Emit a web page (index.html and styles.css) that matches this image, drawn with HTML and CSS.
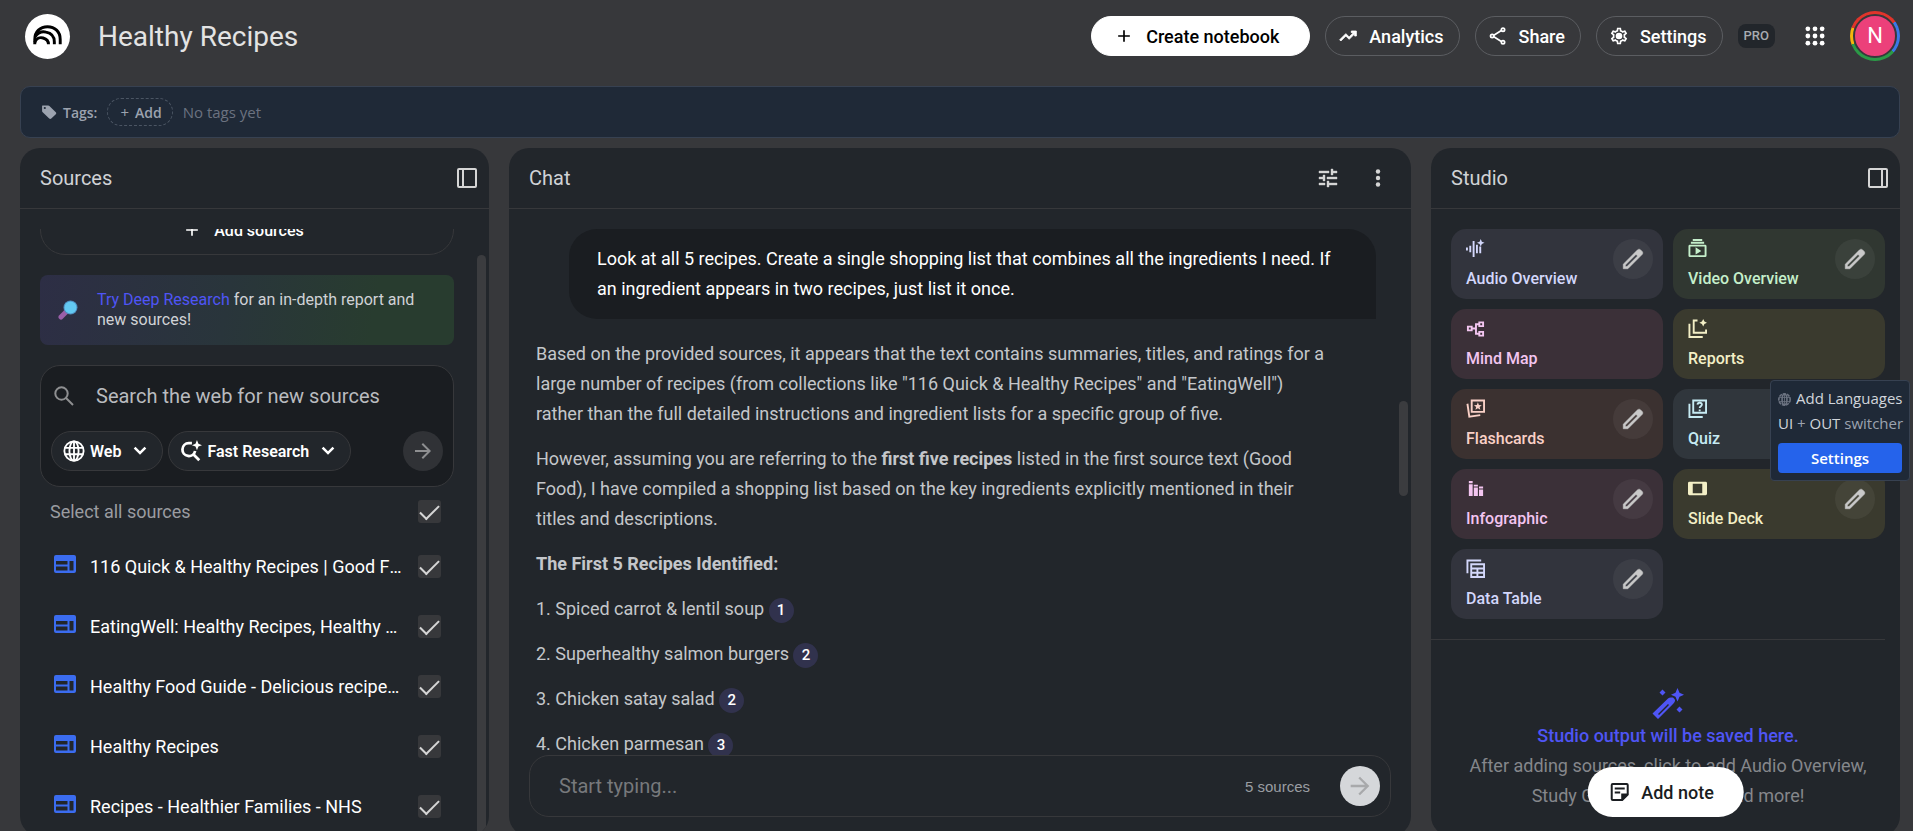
FILE: index.html
```html
<!DOCTYPE html>
<html lang="en">
<head>
  <meta charset="utf-8">
  <title>Healthy Recipes</title>
  <link rel="stylesheet" href="styles.css">
</head>

<body>

<!-- icons that are used more than once -->
<svg class="sprite" aria-hidden="true">
  <symbol id="plus" viewBox="0 0 24 24"><path d="M11 19v-6H5v-2h6V5h2v6h6v2h-6v6z"/></symbol>
  <symbol id="arrow" viewBox="0 0 24 24"><path d="M16.2 13H4v-2h12.2l-5.6-5.6L12 4l8 8-8 8-1.4-1.4z"/></symbol>
  <symbol id="chevron" viewBox="0 0 24 24"><path d="M12 17 3.600 8.600l2.400-2.400 6 6 6-6 2.400 2.400z"/></symbol>
  <symbol id="edit" viewBox="0 0 24 24"><path d="M5 19h1.425L16.2 9.225 14.775 7.8 5 17.575V19Zm-2 2v-4.250L16.200 3.575q.3-.275.663-.425T17.625 3q.4 0 .775.150t.65.450L20.425 5q.3.275.438.650T21 6.400q0 .4-.137.763t-.438.662L7.250 21H3Z" stroke="currentColor" stroke-width=".5"/></symbol>
  <symbol id="web" viewBox="0 0 22 18"><path fill-rule="evenodd" d="M2 0h18a2 2 0 0 1 2 2v14a2 2 0 0 1-2 2H2a2 2 0 0 1-2-2V2a2 2 0 0 1 2-2zm0 6v3.500h11.500V6zm0 5.500V15.500h11.500v-4zM15.500 6v9.500h4V6z"/></symbol>
</svg>

<header class="topbar">
  <a class="logo" href="#" aria-label="Home">
    <svg viewBox="0 0 46 46" fill="none" stroke="#000" stroke-width="3">
      <path d="M10 31v-5c0-8 5.500-13 13-13s13 5 13 13v5"/>
      <path d="M10.500 23c3-4 7-5.500 11-4.500 5.500 1 8.500 5 8.500 10V31"/>
      <path d="M10 29c1.500-4 5-5.500 8.500-4.500 3.500 1 5.500 3.500 5.500 6.500"/>
    </svg>
  </a>
  <h1>Healthy Recipes</h1>
  <nav class="actions">
    <button class="pill create"><svg><use href="#plus"/></svg>Create notebook</button>
    <button class="pill"><svg viewBox="0 0 24 24"><path d="m3.400 18-1.400-1.400L9.400 9.150l4 4L18.600 8H16V6h6v6h-2V9.400L13.400 16l-4-4z" stroke="currentColor"/></svg>Analytics</button>
    <button class="pill"><svg viewBox="0 0 24 24" fill="none" stroke="currentColor" stroke-width="2"><circle cx="18" cy="4.500" r="2"/><circle cx="5" cy="12" r="2"/><circle cx="18" cy="19.500" r="2"/><path d="m7 11 9-5.500M7 13l9 5.500" /></svg>Share</button>
    <button class="pill"><svg viewBox="0 0 24 24"><path d="M19.430 12.980c.04-.32.07-.64.070-.98 0-.34-.03-.66-.07-.98l2.110-1.650c.19-.15.24-.42.120-.64l-2-3.460c-.09-.16-.26-.25-.44-.25-.06 0-.12.010-.17.030l-2.490 1c-.52-.4-1.080-.73-1.690-.98l-.38-2.650C14.460 2.180 14.250 2 14 2h-4c-.25 0-.46.180-.49.420l-.38 2.650c-.61.250-1.170.590-1.690.980l-2.490-1c-.06-.02-.12-.03-.18-.03-.17 0-.34.090-.43.250l-2 3.460c-.13.220-.07.490.120.640l2.110 1.650c-.04.320-.07.650-.07.980 0 .33.03.660.070.980l-2.110 1.650c-.19.150-.24.420-.12.640l2 3.460c.09.160.26.250.440.250.06 0 .12-.01.170-.03l2.490-1c.52.4 1.080.730 1.690.980l.38 2.650c.03.240.24.420.490.420h4c.25 0 .46-.18.490-.42l.38-2.650c.61-.25 1.170-.59 1.690-.98l2.490 1c.06.020.12.030.180.030.17 0 .34-.09.430-.25l2-3.460c.12-.22.070-.49-.12-.64l-2.110-1.650zm-1.980-1.710c.04.310.05.520.050.730 0 .21-.02.430-.05.730l-.14 1.130.89.7 1.080.840-.7 1.210-1.270-.51-1.040-.42-.9.680c-.43.320-.84.560-1.250.730l-1.060.430-.16 1.130-.2 1.350h-1.400l-.19-1.350-.16-1.130-1.060-.43c-.43-.18-.83-.41-1.230-.71l-.91-.7-1.060.430-1.270.510-.7-1.210 1.080-.84.890-.7-.14-1.130c-.03-.31-.05-.54-.05-.74s.02-.43.050-.73l.14-1.130-.89-.7-1.080-.84.7-1.210 1.270.510 1.040.420.9-.68c.43-.32.840-.56 1.250-.73l1.060-.43.160-1.130.2-1.350h1.390l.19 1.350.16 1.130 1.060.430c.43.180.83.410 1.230.710l.91.7 1.060-.43 1.270-.51.7 1.210-1.070.850-.89.7.14 1.130z"/><circle cx="12" cy="12" r="4"/></svg>Settings</button>
    <span class="pro">PRO</span>
    <button class="icon-btn apps" aria-label="Apps"><svg viewBox="0 0 21 21"><circle cx="3" cy="3" r="2.500"/><circle cx="10.500" cy="3" r="2.500"/><circle cx="18" cy="3" r="2.500"/><circle cx="3" cy="10.500" r="2.500"/><circle cx="10.500" cy="10.500" r="2.500"/><circle cx="18" cy="10.500" r="2.500"/><circle cx="3" cy="18" r="2.500"/><circle cx="10.500" cy="18" r="2.500"/><circle cx="18" cy="18" r="2.500"/></svg></button>
    <button class="avatar" aria-label="Account"><span>N</span></button>
  </nav>
</header>

<div class="tagbar">
  <svg viewBox="0 0 16 16"><path fill-rule="evenodd" d="M1.500 1.500h5.700c.5 0 .9.200 1.200.5l6.400 6.200c.6.6.6 1.500 0 2.100l-4.500 4.300c-.6.6-1.500.6-2.100 0L1.700 8.300c-.4-.3-.6-.7-.6-1.200V2c0-.3.100-.5.400-.5zm2.300 1.400a1.100 1.100 0 1 0 0 2.200 1.100 1.100 0 0 0 0-2.200z"/></svg>
  <b>Tags:</b>
  <button class="add-tag"><span>+</span><b>Add</b></button>
  <span class="no-tags">No tags yet</span>
</div>

<main class="panels">

  <section class="panel sources">
    <div class="panel-head">
      <h2>Sources</h2>
      <button class="icon-btn" aria-label="Collapse sources"><svg viewBox="0 0 20 20"><path fill-rule="evenodd" d="M2 0h16a2 2 0 0 1 2 2v16a2 2 0 0 1-2 2H2a2 2 0 0 1-2-2V2a2 2 0 0 1 2-2zm0 2v16h3V2zm5 0v16h11V2z"/></svg></button>
    </div>
    <div class="source-scroll">
      <div class="source-body">
        <button class="add-sources"><svg><use href="#plus"/></svg>Add sources</button>
        <div class="promo">
          <svg viewBox="0 0 20 20"><path d="m3 17 5-5" stroke="#9a5fa8" stroke-width="5" stroke-linecap="round"/><circle cx="12.500" cy="7.500" r="7" fill="#4f8fc0"/><circle cx="12.500" cy="7.500" r="6" fill="#63c9f2"/></svg>
          <p><a href="#">Try Deep Research</a> for an in-depth report and new sources!</p>
        </div>
        <div class="search-box">
          <div class="search-row">
            <svg viewBox="0 0 20 20" fill="none" stroke="currentColor" stroke-width="2"><circle cx="7.500" cy="7.500" r="6.200"/><path d="m12 12 7 7"/></svg>
            <input type="text" aria-label="Search the web" placeholder="Search the web for new sources">
          </div>
          <div class="chip-row">
            <button class="chip"><svg viewBox="0 0 24 24" fill="none" stroke="currentColor" stroke-width="2"><circle cx="12" cy="12" r="10.500"/><ellipse cx="12" cy="12" rx="5" ry="10.500"/><path d="M2 8.500h20M2 15.500h20M12 2v20"/></svg>Web<svg class="chev"><use href="#chevron"/></svg></button>
            <button class="chip"><svg viewBox="0 0 24 24"><path d="M13 3.500H9.500a7 7 0 1 0 7 8.500" fill="none" stroke="currentColor" stroke-width="3"/><path d="m14 15 7 7" stroke="currentColor" stroke-width="3"/><path d="m18.500 0 1.600 4 3.900 1.600-3.900 1.600-1.600 4-1.600-4L13 5.600 16.900 4z"/></svg>Fast Research<svg class="chev"><use href="#chevron"/></svg></button>
            <button class="go" aria-label="Search"><svg><use href="#arrow"/></svg></button>
          </div>
        </div>
        <label class="select-all"><span>Select all sources</span><input type="checkbox" checked></label>
        <label class="source"><svg><use href="#web"/></svg><span>116 Quick &amp; Healthy Recipes | Good Food</span><input type="checkbox" checked></label>
        <label class="source"><svg><use href="#web"/></svg><span>EatingWell: Healthy Recipes, Healthy Eating</span><input type="checkbox" checked></label>
        <label class="source"><svg><use href="#web"/></svg><span>Healthy Food Guide - Delicious recipes and more</span><input type="checkbox" checked></label>
        <label class="source"><svg><use href="#web"/></svg><span>Healthy Recipes</span><input type="checkbox" checked></label>
        <label class="source"><svg><use href="#web"/></svg><span>Recipes - Healthier Families - NHS</span><input type="checkbox" checked></label>
      </div>
      <div class="thumb source-thumb"></div>
    </div>
  </section>

  <section class="panel chat">
    <div class="panel-head">
      <h2>Chat</h2>
      <button class="icon-btn" aria-label="Configure chat"><svg viewBox="2 2 20 20"><path d="M3 17v2h6v-2H3zM3 5v2h10V5H3zm10 16v-2h8v-2h-8v-2h-2v6h2zM7 9v2H3v2h4v2h2V9H7zm14 4v-2H11v2h10zm-6-4h2V7h4V5h-4V3h-2v6z" stroke="currentColor" stroke-width=".4"/></svg></button>
      <button class="icon-btn" aria-label="More"><svg viewBox="0 0 20 20"><circle cx="10" cy="3.500" r="2.200"/><circle cx="10" cy="10" r="2.200"/><circle cx="10" cy="16.500" r="2.200"/></svg></button>
    </div>
    <div class="messages">
      <div class="question">Look at all 5 recipes. Create a single shopping list that combines all the ingredients I need. If an ingredient appears in two recipes, just list it once.</div>
      <div class="answer">
        <p>Based on the provided sources, it appears that the text contains summaries, titles, and ratings for a large number of recipes (from collections like "116 Quick &amp; Healthy Recipes" and "EatingWell") rather than the full detailed instructions and ingredient lists for a specific group of five.</p>
        <p>However, assuming you are referring to the <b>first five recipes</b> listed in the first source text (Good Food), I have compiled a shopping list based on the key ingredients explicitly mentioned in their titles and descriptions.</p>
        <p><b>The First 5 Recipes Identified:</b></p>
        <p>1. Spiced carrot &amp; lentil soup <button class="cite">1</button></p>
        <p>2. Superhealthy salmon burgers <button class="cite">2</button></p>
        <p>3. Chicken satay salad <button class="cite">2</button></p>
        <p>4. Chicken parmesan <button class="cite">3</button></p>
      </div>
      <div class="thumb chat-thumb"></div>
    </div>
    <div class="composer">
      <input type="text" aria-label="Message" placeholder="Start typing...">
      <span class="count">5 sources</span>
      <button class="send" aria-label="Send"><svg><use href="#arrow"/></svg></button>
    </div>
  </section>

  <section class="panel studio">
    <div class="panel-head">
      <h2>Studio</h2>
      <button class="icon-btn" aria-label="Collapse studio"><svg viewBox="0 0 20 20"><path fill-rule="evenodd" d="M2 0h16a2 2 0 0 1 2 2v16a2 2 0 0 1-2 2H2a2 2 0 0 1-2-2V2a2 2 0 0 1 2-2zm0 2v16h11V2zm13 0v16h3V2z"/></svg></button>
    </div>
    <div class="tiles">
      <div class="tile blue">
        <a href="#"><svg viewBox="0 0 20 20"><path d="M0 9h2v3H0zM3.500 7h2v7h-2zM7 2h2v17H7zM10.500 6h2v9h-2zM14 8h2v7h-2z"/><path d="m15.500 0 1.200 2.800L19.500 4l-2.800 1.200L15.500 8l-1.200-2.800L11.500 4l2.800-1.200z"/></svg>Audio Overview</a>
        <button class="edit" aria-label="Edit"><svg><use href="#edit"/></svg></button>
      </div>
      <div class="tile green">
        <a href="#"><svg viewBox="0 0 20 20"><path d="M5 0h10v2H5zM3 3h14v2H3z"/><path fill-rule="evenodd" d="M2 6h16a1.500 1.500 0 0 1 1.500 1.500v10A1.500 1.500 0 0 1 18 19H2a1.500 1.500 0 0 1-1.500-1.500v-10A1.500 1.500 0 0 1 2 6zm.5 2v9h15V8zM8 8.800l6 3.700-6 3.700z"/></svg>Video Overview</a>
        <button class="edit" aria-label="Edit"><svg><use href="#edit"/></svg></button>
      </div>
      <div class="tile pink">
        <a href="#"><svg viewBox="0 0 20 20" fill="none" stroke="currentColor" stroke-width="2"><path d="M2 8h4v4H2zM14 3.500h4v4h-4zM14 13.500h4v4h-4zM6 10h4M14 5.500h-3.500v10H14"/></svg>Mind Map</a>
      </div>
      <div class="tile yellow">
        <a href="#"><svg viewBox="0 0 20 20"><path d="M10 1.500H6v13h13V11M1.500 5v14h14" fill="none" stroke="currentColor" stroke-width="2"/><path d="m16 0 1.300 2.700L20 4l-2.700 1.300L16 8l-1.300-2.700L12 4l2.700-1.300z"/></svg>Reports</a>
      </div>
      <div class="tile orange">
        <a href="#"><svg viewBox="0 0 20 20"><path d="M6 1.500h13v12H6zM1.500 5l2 13.500L15 17" fill="none" stroke="currentColor" stroke-width="2"/><path d="m12.500 3.500 1.100 2.800 3 .2-2.300 1.900.8 2.900-2.600-1.600-2.600 1.600.8-2.900-2.300-1.900 3-.2z"/></svg>Flashcards</a>
        <button class="edit" aria-label="Edit"><svg><use href="#edit"/></svg></button>
      </div>
      <div class="tile teal">
        <a href="#"><svg viewBox="0 0 20 20" fill="none" stroke="currentColor" stroke-width="2"><path d="M5.500 1.500H19v13H5.500zM1.500 5v14h14M10 6c.3-3 4.800-2.600 4.600 0-.1 1.500-2.300 1.700-2.300 3.500M12.300 11v1.800"/></svg>Quiz</a>
        <button class="edit" aria-label="Edit"><svg><use href="#edit"/></svg></button>
      </div>
      <div class="tile pink">
        <a href="#"><svg viewBox="0 0 20 20"><path d="M3 2h4v2.500H3zM3 5.500h4V18H3zM8.200 6h4.300v2H8.200zM8.200 9h4.300v9H8.200zM13.700 8H18v2h-4.300zM13.700 11H18v7h-4.300z"/></svg>Infographic</a>
        <button class="edit" aria-label="Edit"><svg><use href="#edit"/></svg></button>
      </div>
      <div class="tile yellow">
        <a href="#"><svg viewBox="0 0 20 20"><path fill-rule="evenodd" d="M1.500 3h17A1.500 1.500 0 0 1 20 4.500v11a1.500 1.500 0 0 1-1.500 1.500h-17A1.500 1.500 0 0 1 0 15.500v-11A1.500 1.500 0 0 1 1.500 3zM5 5v10h10V5z"/></svg>Slide Deck</a>
        <button class="edit" aria-label="Edit"><svg><use href="#edit"/></svg></button>
      </div>
      <div class="tile blue">
        <a href="#"><svg viewBox="0 0 20 20" fill="none" stroke="currentColor" stroke-width="2"><path d="M5.500 5.500H19V19H5.500zM5.500 10H19M5.500 14.500H19M12 10v9M1.500 15V1.500H16"/></svg>Data Table</a>
        <button class="edit" aria-label="Edit"><svg><use href="#edit"/></svg></button>
      </div>
    </div>
    <div class="output">
      <svg viewBox="0 0 32 32"><path fill-rule="evenodd" d="M20 9.500c1-.5 3.500 2 3 3.200-.3 1.600-1 2.300-2 3.300L6 31l-5.500-5.500L16 10.500c1-1 2.500-1.300 4-1zM6 26l1 1 10-10-1-1z"/><path d="m25.500 0 2 4.700 4.500 2-4.500 2-2 4.800-2-4.800-4.500-2 4.500-2zM10.500 1.500l3 3-3 3-3-3zM27.500 18.500l3 3-3 3-3-3z"/></svg>
      <strong>Studio output will be saved here.</strong>
      <p>After adding sources, click to add Audio Overview, Study Guide, Mind Map, and more!</p>
    </div>
    <button class="add-note"><svg viewBox="0 0 20 20"><path d="M12.500 18H3a1 1 0 0 1-1-1V3a1 1 0 0 1 1-1h14a1 1 0 0 1 1 1v9.500zM18 12.500h-5.500V18M5 6.500h10M5 10.500h5.500" fill="none" stroke="currentColor" stroke-width="2"/><path d="M12.500 12.500H18L12.500 18z"/></svg>Add note</button>
  </section>

</main>

<aside class="lang-popup">
  <p><svg viewBox="0 0 16 16" fill="none" stroke="currentColor"><circle cx="8" cy="8" r="7" stroke-width="2" stroke-dasharray="4 1"/><ellipse cx="8" cy="8" rx="3" ry="6.500" stroke-width="2"/><path d="M1 5.500h14M1 10.500h14M8 1v14"/></svg>Add Languages</p>
  <p>UI <i>+</i> OUT <i>switcher</i></p>
  <button>Settings</button>
</aside>

</body>
</html>
```
FILE: styles.css
```css
* {
  box-sizing: border-box;
}

body {
  margin: 0;
  height: 100vh;
  overflow: hidden;
  padding: 0 13px 0 20px;
  background-color: #37383b;
  color: #e3e3e3;
  font-family: Roboto, "Liberation Sans", sans-serif;
  font-size: 18px;
}

h1, h2, p {
  margin: 0;
  font-weight: 400;
}

button, input {
  font: inherit;
  color: inherit;
  margin: 0;
}

button {
  background: none;
  border: none;
  padding: 0;
  cursor: pointer;
}

a {
  color: inherit;
  text-decoration: none;
}

svg {
  width: 20px;
  height: 20px;
  flex: none;
  fill: currentColor;
}

svg[fill="none"] {
  fill: none;
}

.sprite {
  display: none;
}

/* top bar */

.topbar {
  display: flex;
  align-items: center;
  height: 72px;
  padding-left: 5px;
}

.logo {
  width: 45px;
  height: 45px;
  border-radius: 50%;
  background-color: #fff;
}

.logo svg {
  width: 45px;
  height: 45px;
}

h1 {
  margin-left: 28px;
  font-size: 28px;
}

.actions {
  display: flex;
  align-items: center;
  gap: 15px;
  margin-left: auto;
}

.pill {
  display: flex;
  align-items: center;
  gap: 11px;
  height: 40px;
  padding: 0 15px 0 12px;
  border: 1px solid #5b5d61;
  border-radius: 20px;
  font-weight: 500;
  color: #fff;
}

.create {
  gap: 12px;
  padding: 0 30px 0 22px;
  border-color: #fff;
  background-color: #fff;
  color: #000;
}

.pro {
  padding: 0 6px;
  border-radius: 8px;
  background-color: #22262b;
  color: #a8abb0;
  font-size: 13px;
  font-weight: 500;
  line-height: 24px;
}

.icon-btn {
  display: flex;
  color: #d5d5d5;
}

.apps {
  margin: 0 10px 0 15px;
  color: #fff;
}

.avatar {
  width: 50px;
  height: 50px;
  padding: 3px;
  border-radius: 50%;
  background: conic-gradient(#e0342b 0 55deg, #3b78e7 55deg 130deg, #2b9a47 130deg 250deg, #f6b50c 250deg 290deg, #e0342b 290deg);
}

.avatar span {
  display: block;
  border: 2px solid #37383b;
  border-radius: 50%;
  background-color: #ec407a;
  color: #fff;
  font-size: 22px;
  line-height: 40px;
}

/* tags */

.tagbar {
  display: flex;
  align-items: center;
  height: 52px;
  margin: 14px 0 10px;
  padding: 0 20px;
  border: 1px solid #374151;
  border-radius: 10px;
  background-color: #1f2937;
  color: #9ca3af;
  font-family: "Open Sans", "Noto Sans", sans-serif;
  font-size: 15px;
}

.tagbar svg {
  width: 16px;
  height: 16px;
  margin-right: 6px;
}

.tagbar b {
  font-size: 14px;
  font-weight: 600;
}

.add-tag {
  display: flex;
  align-items: center;
  gap: 6px;
  height: 28px;
  margin: 0 10px;
  padding: 0 10px 0 12px;
  border: 1px dashed #4b5563;
  border-radius: 14px;
}

.no-tags {
  color: #6b7280;
}

/* panels */

.panels {
  display: grid;
  grid-template-columns: 469fr 902fr 469fr;
  gap: 20px;
  height: calc(100vh - 143px);
}

.panel {
  position: relative;
  display: flex;
  flex-direction: column;
  min-width: 0;
  overflow: hidden;
  border-radius: 20px;
  background-color: #22262b;
}

.panel-head {
  display: flex;
  align-items: center;
  flex: none;
  gap: 30px;
  height: 61px;
  padding: 0 12px 0 20px;
  border-bottom: 1px solid #37383b;
}

.chat .panel-head {
  padding-right: 23px;
}

h2 {
  margin-right: auto;
  font-size: 20px;
  color: #d0d2d6;
}

.thumb {
  position: absolute;
  right: 3px;
  width: 9px;
  border-radius: 5px;
  background-color: #3b3c3f;
}

/* sources */

.source-scroll {
  position: relative;
  flex: 1;
  min-height: 0;
  margin-top: 20px;
  overflow: hidden;
}

.source-thumb {
  top: 26px;
  bottom: 0;
}

.source-body {
  margin: -24px 35px 0 20px;
}

.add-sources {
  display: flex;
  align-items: center;
  justify-content: center;
  gap: 12px;
  width: 100%;
  height: 50px;
  padding-right: 8px;
  border: 1px solid #37383b;
  border-radius: 25px;
  font-size: 16px;
  font-weight: 500;
  color: #fff;
}

.promo {
  display: flex;
  align-items: center;
  gap: 19px;
  height: 70px;
  margin: 20px 0;
  padding: 0 10px 0 18px;
  border-radius: 8px;
  background: linear-gradient(100deg, #2d2e45, #29353b 45%, #283c2f 80%);
  font-size: 16px;
  font-weight: 500;
  line-height: 20px;
  color: #d0d2d6;
}

.promo a {
  color: #4f55f5;
}

.search-box {
  height: 122px;
  padding: 12px 10px 0;
  border: 1px solid #37383b;
  border-radius: 20px;
  background-color: #1a1d21;
}

.search-row {
  display: flex;
  align-items: center;
  gap: 22px;
  height: 36px;
  padding: 0 3px;
  color: #8e8f91;
}

.search-row input {
  flex: 1;
  min-width: 0;
  padding: 0;
  border: none;
  background: none;
  font-size: 20px;
}

.search-row input::placeholder {
  color: #b9bbbf;
  opacity: 1;
}

.chip-row {
  display: flex;
  gap: 5px;
  margin-top: 17px;
}

.chip {
  display: flex;
  align-items: center;
  gap: 5px;
  height: 40px;
  padding: 0 13px 0 11px;
  border: 1px solid #37383b;
  border-radius: 20px;
  background-color: #22262b;
  font-size: 16px;
  font-weight: 600;
  color: #fff;
}

.chip svg {
  width: 22px;
  height: 22px;
}

.chip .chev {
  width: 18px;
  height: 18px;
  margin-left: 5px;
}

.go, .send {
  display: flex;
  align-items: center;
  justify-content: center;
  width: 40px;
  height: 40px;
  border-radius: 50%;
  background-color: #303236;
  color: #8e8f91;
}

.go {
  margin-left: auto;
}

.go svg {
  width: 24px;
  height: 24px;
}

.select-all, .source {
  display: flex;
  align-items: center;
  height: 60px;
  padding: 0 13px 0 14px;
}

.select-all {
  height: 49px;
  padding-left: 10px;
  color: #9a9ca1;
}

.select-all span, .source span {
  flex: 1;
  min-width: 0;
  overflow: hidden;
  white-space: nowrap;
  text-overflow: ellipsis;
}

.source {
  color: #fff;
}

.source svg {
  width: 22px;
  height: 18px;
  margin: 0 14px 4px 0;
  color: #3b6cf0;
}

input[type="checkbox"] {
  appearance: none;
  display: flex;
  justify-content: center;
  width: 23px;
  height: 23px;
  margin-left: 12px;
  border-radius: 3px;
  background-color: #37383b;
}

input[type="checkbox"]:checked::before {
  content: "";
  width: 17px;
  height: 8px;
  margin-top: 5px;
  border: solid #d5d5d5;
  border-width: 0 0 2px 2px;
  transform: rotate(-45deg);
}

/* chat */

.messages {
  position: relative;
  flex: 1;
  min-height: 0;
  padding: 20px 35px 0 27px;
  overflow: hidden;
  line-height: 30px;
}

.chat-thumb {
  top: 192px;
  height: 95px;
}

.question {
  margin: 0 0 20px 33px;
  padding: 15px 28px;
  border-radius: 28px 28px 0 28px;
  background-color: #1a1d21;
  color: #fff;
}

.answer {
  padding-right: 50px;
  color: #c4c6ca;
}

.answer p {
  margin-bottom: 15px;
}

.cite {
  width: 25px;
  height: 25px;
  border-radius: 50%;
  background-color: #31324d;
  color: #fff;
  font-size: 15px;
  font-weight: 500;
  line-height: 24px;
}

.composer {
  display: flex;
  align-items: center;
  height: 62px;
  margin: 0 20px 19px;
  padding: 0 10px 0 29px;
  border: 1px solid #37383b;
  border-radius: 20px;
}

.composer input {
  flex: 1;
  padding: 0;
  border: none;
  background: none;
  font-size: 20px;
}

.composer input::placeholder {
  color: #77797c;
  opacity: 1;
}

.count {
  margin-right: 30px;
  color: #9a9da2;
  font-family: "Liberation Sans", Arial, sans-serif;
  font-size: 15px;
}

.send {
  background-color: #d5d7da;
  color: #a8a9ab;
}

.send svg {
  width: 28px;
  height: 28px;
}

/* studio */

.tiles {
  display: grid;
  grid-template-columns: 1fr 1fr;
  gap: 10px;
  padding: 20px 15px 20px 20px;
}

.tile {
  display: flex;
  justify-content: space-between;
  height: 70px;
  padding: 10px 10px 10px 15px;
  border-radius: 15px;
}

.tile a {
  display: flex;
  flex-direction: column;
  gap: 11px;
  font-size: 16px;
  font-weight: 500;
  line-height: 20px;
}

.tile a svg {
  width: 19px;
  height: 19px;
}

.blue { background-color: #32343d; color: #d3d7fb; }
.green { background-color: #303731; color: #c5efcb; }
.pink { background-color: #3b3038; color: #f3c5f0; }
.yellow { background-color: #3a3a2e; color: #f3efc6; }
.orange { background-color: #3b3130; color: #f9d0c6; }
.teal { background-color: #30363c; color: #c6ebf3; }

.edit {
  display: flex;
  align-items: center;
  justify-content: center;
  width: 40px;
  height: 40px;
  border-radius: 50%;
  background-color: rgba(255, 255, 255, 0.05);
  color: #c9c9c9;
}

.edit svg {
  width: 26px;
  height: 26px;
}

.output {
  margin-right: 15px;
  padding: 48px 0 0 20px;
  border-top: 1px solid #37383b;
  text-align: center;
  line-height: 30px;
  color: #85878b;
}

.output svg {
  display: block;
  width: 32px;
  height: 32px;
  margin: 0 auto 1px;
  color: #4f55f5;
}

.output strong {
  font-weight: 500;
  color: #4f55f5;
}

.output p {
  padding: 0 10px;
}

.add-note {
  position: absolute;
  bottom: 19px;
  left: 50%;
  transform: translateX(-50%);
  display: flex;
  align-items: center;
  gap: 12px;
  height: 50px;
  padding: 0 30px 0 22px;
  border-radius: 25px;
  background-color: #fff;
  color: #1a1d21;
  font-weight: 500;
  white-space: nowrap;
}

/* floating helper */

.lang-popup {
  position: absolute;
  top: 380px;
  right: 3px;
  width: 140px;
  padding: 5px 7px 7px;
  border: 1px solid #374151;
  border-radius: 4px;
  background-color: #1f2937;
  color: #d1d5db;
  font-family: "Open Sans", "Noto Sans", sans-serif;
  font-size: 15px;
  line-height: 25px;
  white-space: nowrap;
}

.lang-popup svg {
  width: 13px;
  height: 13px;
  margin-right: 5px;
  vertical-align: -2px;
  color: #6b7280;
}

.lang-popup i {
  font-style: normal;
  color: #9ca3af;
}

.lang-popup button {
  display: block;
  width: 100%;
  height: 30px;
  margin-top: 7px;
  border-radius: 4px;
  background-color: #2563eb;
  color: #fff;
  font-weight: 600;
}
```
